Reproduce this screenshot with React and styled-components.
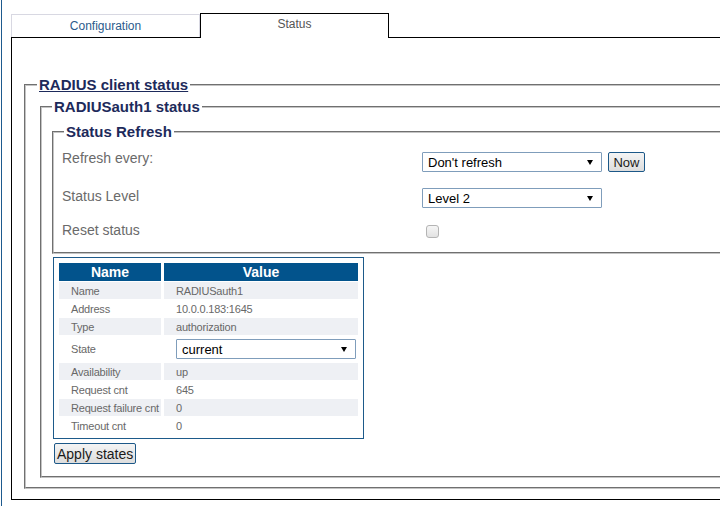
import React from 'react';
import styled, { createGlobalStyle } from 'styled-components';

const GlobalStyle = createGlobalStyle`
  html, body {
    margin: 0;
    padding: 0;
    background: #fff;
    overflow: hidden;
  }
  body {
    font-family: "Liberation Sans", Arial, sans-serif;
  }
`;

const Page = styled.div`
  margin-left: 1px;
  border-left: 1px solid #1e5a8e;
  padding: 13px 0 0 9px;
  min-height: 506px;
  box-sizing: border-box;
  width: 780px;
`;

const TabBar = styled.div`
  display: flex;
  align-items: flex-end;
  height: 24px;
`;

const Tab = styled.div`
  position: relative;
  z-index: 1;
  width: 187px;
  margin-bottom: ${p => (p.$active ? '-1px' : '0')};
  border: 1px solid ${p => (p.$active ? '#000' : '#d8d8e2')};
  border-bottom: none;
  background: #fff;
  color: ${p => (p.$active ? '#555' : '#2b5b8c')};
  font-size: 12px;
  line-height: 14px;
  padding-top: ${p => (p.$active ? '3px' : '4px')};
  box-sizing: content-box;
  height: ${p => (p.$active ? '21px' : '18px')};
  text-align: center;
`;

const Panel = styled.div`
  border: 1px solid #000;
  width: 760px;
  padding: 38px 0 10px 12px;
  box-sizing: border-box;
`;

const Fieldset = styled.fieldset`
  border: 2px groove #c4c4c4;
  margin: 0 0 0 ${p => p.$ml || 0}px;
  padding: ${p => p.$pt}px 0 ${p => p.$pb}px ${p => p.$pl}px;
  min-width: 0;
`;

const Legend = styled.legend`
  padding: 0 2px;
  margin-left: ${p => p.$ml || 0}px;
  font-size: 15px;
  font-weight: bold;
  color: #1d2a5b;
  text-decoration: ${p => (p.$underline ? 'underline' : 'none')};
  line-height: 17px;
`;

const FormGrid = styled.div`
  display: grid;
  grid-template-columns: 360px auto;
  grid-template-rows: 36px 36px 30px;
  align-items: center;
`;

const Label = styled.div`
  font-size: 14px;
  color: #6a6a6a;
  margin-bottom: ${p => p.$mb}px;
`;

const Control = styled.div`
  display: flex;
  align-items: center;
`;

const SelectBox = styled.div`
  position: relative;
  width: ${p => p.$w || 180}px;
  height: 20px;
  box-sizing: border-box;
  border: 1px solid #7f9dbb;
  border-radius: 1px;
  background: #fff;

  &::after {
    content: '';
    position: absolute;
    right: 8px;
    top: 7px;
    border-left: 3.5px solid transparent;
    border-right: 3.5px solid transparent;
    border-top: 5px solid #000;
    pointer-events: none;
  }
`;

const Select = styled.select`
  appearance: none;
  -webkit-appearance: none;
  border: none;
  outline: none;
  background: transparent;
  width: 100%;
  height: 18px;
  padding: 0 0 0 5px;
  margin: 0;
  font-family: "Liberation Sans", Arial, sans-serif;
  font-size: 13px;
  color: #000;
`;

const Button = styled.button`
  height: ${p => p.$h || 20}px;
  min-width: ${p => p.$minw || 0}px;
  padding: 0 ${p => p.$px || 3}px;
  margin: ${p => p.$margin || 0};
  border: 1px solid #1c5888;
  border-radius: 2px;
  background: linear-gradient(#f4f4f4, #dddddd);
  font-family: "Liberation Sans", Arial, sans-serif;
  font-size: ${p => p.$fs || 13}px;
  color: #1a1a1a;
  display: ${p => (p.$block ? 'block' : 'inline-block')};
`;

const Checkbox = styled.input`
  appearance: none;
  -webkit-appearance: none;
  width: 13px;
  height: 13px;
  margin: 0 0 0 4px;
  border: 1px solid #b4b4b4;
  border-radius: 3px;
  background: linear-gradient(#f6f6f6, #e2e2e2);
  box-sizing: border-box;
`;

const TableCard = styled.div`
  margin-top: 3px;
  width: 311px;
  box-sizing: border-box;
  border: 1px solid #1d5a8a;
  padding: 4px 2px 3px 2px;
`;

const Table = styled.table`
  table-layout: fixed;
  width: 305px;
  border-collapse: separate;
  border-spacing: 3px 1px;
`;

const Th = styled.th`
  height: 18px;
  padding: 0;
  background: #02538c;
  color: #fff;
  font-size: 14px;
  font-weight: bold;
  line-height: 18px;
  text-align: center;
`;

const Row = styled.tr`
  & > td {
    background: ${p => (p.$shade ? '#eef0f4' : '#fff')};
    height: ${p => p.$h || 17}px;
  }
`;

const Td = styled.td`
  padding: 0 0 0 12px;
  font-size: 11px;
  letter-spacing: -0.2px;
  color: #686868;
  white-space: nowrap;
  overflow: visible;
`;

const rows = [
  { name: 'Name', value: 'RADIUSauth1' },
  { name: 'Address', value: '10.0.0.183:1645' },
  { name: 'Type', value: 'authorization' },
  { name: 'State', select: 'current' },
  { name: 'Availability', value: 'up' },
  { name: 'Request cnt', value: '645' },
  { name: 'Request failure cnt', value: '0' },
  { name: 'Timeout cnt', value: '0' },
];

const Dropdown = ({ value, options, w }) => (
  <SelectBox $w={w}>
    <Select defaultValue={value}>
      {options.map(o => (
        <option key={o}>{o}</option>
      ))}
    </Select>
  </SelectBox>
);

export default function App() {
  return (
    <>
      <GlobalStyle />
      <Page>
        <TabBar>
          <Tab>Configuration</Tab>
          <Tab $active>Status</Tab>
        </TabBar>
        <Panel>
          <Fieldset $pl={14} $pt={5} $pb={9}>
            <Legend $ml={-3} $underline>RADIUS client status</Legend>
            <Fieldset $pl={11} $pt={8} $pb={12}>
              <Legend $ml={-1}>RADIUSauth1 status</Legend>
              <Fieldset $ml={-1} $pl={8} $pt={4} $pb={6}>
                <Legend $ml={2}>Status Refresh</Legend>
                <FormGrid>
                  <Label $mb={8}>Refresh every:</Label>
                  <Control>
                    <Dropdown value="Don't refresh" options={["Don't refresh", '5 sec', '10 sec', '30 sec', '60 sec']} />
                    <Button $margin="0 0 0 6px" $minw={37}>Now</Button>
                  </Control>
                  <Label $mb={5}>Status Level</Label>
                  <Control>
                    <Dropdown value="Level 2" options={['Level 1', 'Level 2', 'Level 3']} />
                  </Control>
                  <Label $mb={2}>Reset status</Label>
                  <Control>
                    <Checkbox type="checkbox" />
                  </Control>
                </FormGrid>
              </Fieldset>
              <TableCard>
                <Table>
                  <colgroup>
                    <col style={{ width: 102 }} />
                    <col />
                  </colgroup>
                  <thead>
                    <tr>
                      <Th>Name</Th>
                      <Th>Value</Th>
                    </tr>
                  </thead>
                  <tbody>
                    {rows.map((r, i) => (
                      <Row key={r.name} $shade={i % 2 === 0 && !r.select} $h={r.select ? 26 : 17}>
                        <Td>{r.name}</Td>
                        <Td>
                          {r.select ? (
                            <Dropdown value={r.select} options={['current', 'standby', 'disabled']} />
                          ) : (
                            r.value
                          )}
                        </Td>
                      </Row>
                    ))}
                  </tbody>
                </Table>
              </TableCard>
              <Button $h={21} $px={2} $fs={14} $margin="4px 0 0 1px" $block>
                Apply states
              </Button>
            </Fieldset>
          </Fieldset>
        </Panel>
      </Page>
    </>
  );
}
